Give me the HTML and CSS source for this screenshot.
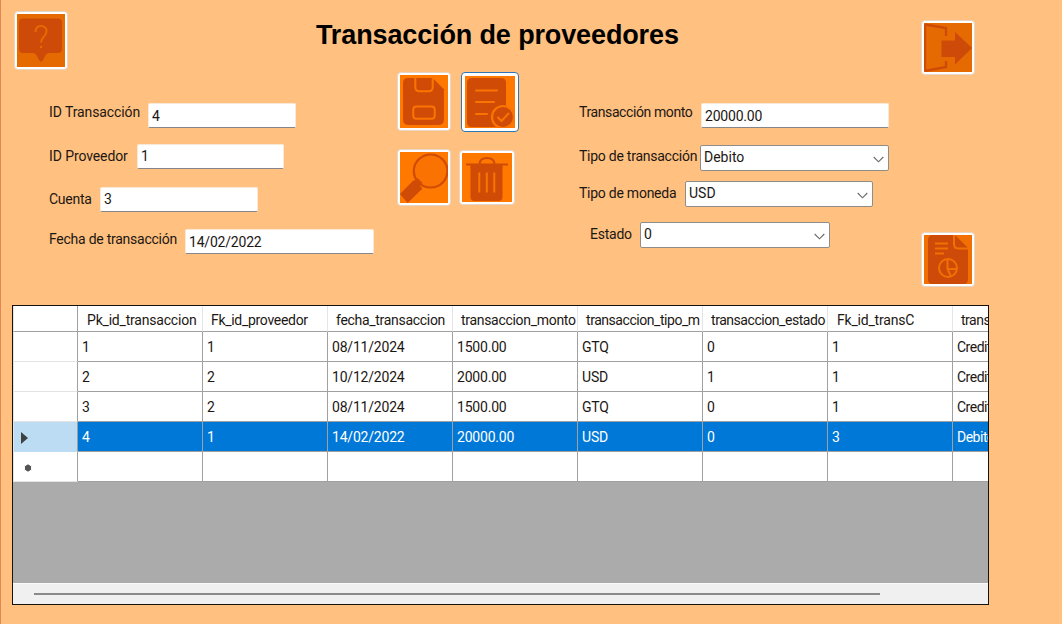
FILE: index.html
```html
<!DOCTYPE html>
<html lang="es">
<head>
<meta charset="utf-8">
<title>Transacción de proveedores</title>
<link rel="stylesheet" href="styles.css">
</head>
<body>
<div class="window">
  <div class="top">
    <div class="content">
      <header class="header">
        <button class="btn btn-help" aria-label="Ayuda">
          <svg viewBox="0 0 48 53" preserveAspectRatio="none"><rect width="48" height="53" fill="#e66a02"/><path d="M6 4.500h35q4 0 4 4v26q0 4.500-4 4.500h-9q-2.500 0-4 3l-2 4q-2 3.500-4 0l-2-4q-1.500-3-4-3H6q-4 0-4-4.500v-26q0-4 4-4z" fill="#cd4a09"/><path d="M18.500 18q0-6 5.500-6t5.500 5.500c0 5-5.500 5.500-5.500 11" fill="none" stroke="#e66a02" stroke-width="2"/><circle cx="24" cy="33" r="1.300" fill="#e66a02"/></svg>
        </button>
        <h1 class="title">Transacción de proveedores</h1>
      </header>
      <div class="form">
        <div class="fields fields-left">
          <div class="row row-id"><span class="label">ID Transacción</span><div class="input">4</div></div>
          <div class="row row-prov"><span class="label">ID Proveedor</span><div class="input">1</div></div>
          <div class="row row-cuenta"><span class="label">Cuenta</span><div class="input">3</div></div>
          <div class="row row-fecha"><span class="label">Fecha de transacción</span><div class="input">14/02/2022</div></div>
        </div>
        <div class="actions">
          <div class="pair pair-first">
            <button class="btn btn-save" aria-label="Guardar">
              <svg viewBox="0 0 47 52" preserveAspectRatio="none"><rect width="47" height="52" fill="#ff7800"/><path d="M8 3h24l11 11v30q0 5-5 5H8q-5 0-5-5V8q0-5 5-5z" fill="#d04b06"/><path d="M15 2v10q0 4 4 4h9q4 0 4-4V2M16 31h15q3 0 3 3v6q0 3-3 3H16q-3 0-3-3v-6q0-3 3-3z" fill="none" stroke="#fa7404" stroke-width="2"/></svg>
            </button>
            <button class="btn btn-edit" aria-label="Modificar">
              <svg viewBox="0 0 50 52" preserveAspectRatio="none"><rect width="50" height="52" fill="#ff7800"/><path d="M7 2h29q5 0 5 5v44H7q-5 0-5-5V7q0-5 5-5z" fill="#d04b06"/><path d="M11 14.500h21M11 26h18M11 38h11" stroke="#fa7404" stroke-width="2" stroke-linecap="round"/><circle cx="38" cy="41" r="11" fill="#d04b06" stroke="#fa7404" stroke-width="2.200"/><path d="M32.500 41l4 4 7.500-8" fill="none" stroke="#fa7404" stroke-width="2"/></svg>
            </button>
          </div>
          <div class="pair">
            <button class="btn btn-search" aria-label="Buscar">
              <svg viewBox="0 0 47 51" preserveAspectRatio="none"><rect width="47" height="51" fill="#ff7800"/><path d="M0 42l13.500-14L22 36.500 7.500 51z" fill="#d04b06"/><circle cx="30" cy="19" r="16.500" fill="#f97202" stroke="#d04b06" stroke-width="2.200"/><path d="M15 33l4.500-4.500" stroke="#d04b06" stroke-width="7"/></svg>
            </button>
            <button class="btn btn-trash" aria-label="Eliminar">
              <svg viewBox="0 0 50 49" preserveAspectRatio="none"><rect width="50" height="49" fill="#ff7800"/><path d="M8.500 14h32v30q0 4-4 4h-24q-4 0-4-4z" fill="#d04b06"/><path d="M4 11.500h42M17.500 11Q18 5 25 5t7.500 6" fill="none" stroke="#d04b06" stroke-width="2.200"/><path d="M8.500 11h32v4h-32z" fill="#d04b06"/><path d="M17.300 19.500v20M24.800 19.500v20M32.300 19.500v20" stroke="#fa7404" stroke-width="2"/></svg>
            </button>
          </div>
        </div>
        <div class="fields fields-right">
          <div class="row row-monto"><span class="label">Transacción monto</span><div class="input">20000.00</div></div>
          <div class="row row-tipo"><span class="label">Tipo de transacción</span><div class="combo"><span>Debito</span><svg class="chev" viewBox="0 0 11 7"><path d="M.7 1l4.800 4.800L10.300 1"/></svg></div></div>
          <div class="row row-moneda"><span class="label">Tipo de moneda</span><div class="combo"><span>USD</span><svg class="chev" viewBox="0 0 11 7"><path d="M.7 1l4.800 4.800L10.300 1"/></svg></div></div>
          <div class="row row-estado"><span class="label">Estado</span><div class="combo"><span>0</span><svg class="chev" viewBox="0 0 11 7"><path d="M.7 1l4.800 4.800L10.300 1"/></svg></div></div>
        </div>
      </div>
    </div>
    <div class="side">
      <button class="btn btn-exit" aria-label="Salir">
        <svg viewBox="0 0 48 49" preserveAspectRatio="none"><rect width="48" height="49" fill="#e66a02"/><path d="M1 1.500L22 5v8M1 48l21-4v-6M1 1.500V48" fill="none" stroke="#cd4a09" stroke-width="2.300"/><path d="M17.500 17.500H31V9l17 16-17 16.500V34H17.500z" fill="#cd4a09"/></svg>
      </button>
      <button class="btn btn-report" aria-label="Reporte">
        <svg viewBox="0 0 48 49" preserveAspectRatio="none"><rect width="48" height="49" fill="#f27003"/><path d="M9 0h22l13 13v31q0 5-4 5H7q-3-1-3-5V5q0-5 5-5z" fill="#cd4a09"/><path d="M30 0v9q0 4.500 4.500 4.500H44M11 8.500h13M11 13.500h13M11 18.500h9" fill="none" stroke="#f27003" stroke-width="2"/><circle cx="24" cy="33" r="9" fill="none" stroke="#f27003" stroke-width="2"/><path d="M23.500 24v10l3.500 7.500M24 34h9" fill="none" stroke="#f27003" stroke-width="2"/></svg>
      </button>
    </div>
  </div>

  <div class="grid">
    <div class="tr th"><div class="rh"></div><div>Pk_id_transaccion</div><div>Fk_id_proveedor</div><div>fecha_transaccion</div><div>transaccion_monto</div><div>transaccion_tipo_m</div><div>transaccion_estado</div><div>Fk_id_transC</div><div>transaccion</div></div>
    <div class="tr"><div class="rh"></div><div>1</div><div>1</div><div>08/11/2024</div><div>1500.00</div><div>GTQ</div><div>0</div><div>1</div><div>Credito</div></div>
    <div class="tr"><div class="rh"></div><div>2</div><div>2</div><div>10/12/2024</div><div>2000.00</div><div>USD</div><div>1</div><div>1</div><div>Credito</div></div>
    <div class="tr"><div class="rh"></div><div>3</div><div>2</div><div>08/11/2024</div><div>1500.00</div><div>GTQ</div><div>0</div><div>1</div><div>Credito</div></div>
    <div class="tr selected"><div class="rh"><svg class="arrow" viewBox="0 0 7 12"><path d="M0 0l7 6-7 6z"/></svg></div><div>4</div><div>1</div><div>14/02/2022</div><div>20000.00</div><div>USD</div><div>0</div><div>3</div><div>Debito</div></div>
    <div class="tr"><div class="rh"><svg class="star" viewBox="0 0 8 8"><circle cx="4" cy="4" r="2.700"/><path d="M4 .3v7.400M.8 2.100l6.400 3.800M.8 5.900l6.400-3.800"/></svg></div><div></div><div></div><div></div><div></div><div></div><div></div><div></div><div></div></div>
    <div class="scroll"><div class="thumb"></div></div>
  </div>
</div>
</body>
</html>
```
FILE: styles.css
```css
* { box-sizing: border-box; }
body { margin: 0; }
.window {
  width: 1062px; height: 624px; overflow: hidden;
  background: #ffc080; border-left: 1px solid #df8a55;
  font-family: Roboto, "Liberation Sans", sans-serif;
  font-size: 14px; color: #1c1713;
}
.top { display: flex; height: 305px; }
.content { width: 920px; }
.header { display: flex; height: 72px; padding: 11px 0 0 13px; }
.title {
  margin: 8px 0 0 248px; font: bold 27px/32px "Liberation Sans", Arial, sans-serif;
  letter-spacing: -.13px; color: #000; white-space: nowrap;
}
.btn {
  display: block; flex: none; padding: 2px; background: #fff;
  border: 1px solid #e6d6c8; border-radius: 4px;
}
.btn svg { display: block; width: 100%; height: 100%; }
.btn-help { width: 54px; height: 59px; }
.form { display: flex; }
.fields { white-space: nowrap; }
.fields-left { width: 396px; padding: 31px 0 0 48px; }
.row { display: flex; }
.label { flex: none; line-height: 18px; letter-spacing: -.25px; }
.input {
  height: 25px; padding: 3px 0 0 3px; line-height: 18px; letter-spacing: -.2px; background: #fff;
  border: 1px solid #fbe9d8; border-bottom-color: #85868b; border-radius: 2px;
}
.row-id { height: 41px; }
.row-id .label { width: 99px; letter-spacing: -.1px; }
.row-id .input { width: 148px; }
.row-prov { height: 43px; }
.row-prov .label { width: 88px; padding-top: 3px; letter-spacing: -.1px; }
.row-prov .input { width: 147px; }
.row-prov .input, .row-cuenta .input { padding-top: 2px; }
.row-cuenta { height: 42px; }
.row-cuenta .label { width: 51px; padding-top: 3px; }
.row-cuenta .input { width: 158px; }
.row-fecha .label { width: 136px; padding-top: 1px; }
.row-fecha .input { width: 189px; }
.actions { width: 182px; display: flex; flex-direction: column; gap: 17px; }
.pair { display: flex; gap: 8px; }
.pair-first { gap: 10px; height: 60px; }
.btn-save { width: 54px; height: 59px; }
.btn-edit { width: 58px; height: 60px; border-color: #2e75b5; padding: 3px; }
.btn-search { width: 54px; height: 57px; }
.btn-trash { width: 56px; height: 55px; margin-top: 1px; }
.fields-right { padding-top: 31px; }
.combo {
  display: flex; justify-content: space-between; height: 26px; padding: 2px 4px 0 3px;
  line-height: 18px; background: #fff; border: 1px solid #8f8c89; border-radius: 2px;
}
.chev { width: 11px; height: 7px; margin-top: 8px; fill: none; stroke: #69696b; stroke-width: 1.1; }
.row-monto { height: 42px; }
.row-monto .label { width: 122px; letter-spacing: -.4px; }
.row-monto .input { width: 188px; }
.row-tipo { height: 36px; }
.row-tipo .label { width: 121px; padding-top: 2px; }
.row-tipo .combo { width: 189px; }
.row-moneda { height: 41px; }
.row-moneda .label { width: 106px; padding-top: 3px; }
.row-moneda .combo { width: 188px; }
.row-estado { padding-left: 11px; }
.row-estado .label { width: 50px; padding-top: 3px; }
.row-estado .combo { width: 190px; }
.side { padding-top: 20px; }
.btn-exit { width: 54px; height: 55px; }
.btn-report { width: 54px; height: 55px; margin-top: 157px; }

.grid {
  display: flex; flex-direction: column; width: 977px; height: 300px; margin-left: 11px;
  background: #ababab; border: 1px solid #17120e; overflow: hidden;
}
.tr { display: flex; flex: none; height: 30px; }
.tr > div {
  flex: none; width: 125px; padding-left: 4px; line-height: 31px; overflow: hidden; white-space: nowrap;
  letter-spacing: -.2px; background: #fff;
  border-right: 1px solid #a0a0a0; border-bottom: 1px solid #a0a0a0;
}
.tr > .rh {
  width: 65px; border-left: 1px solid #e4e4e4; border-bottom-color: #e3e3e3;
  display: flex; align-items: center;
}
.th { height: 26px; }
.th > div { line-height: 28px; padding-left: 8px; letter-spacing: -.3px; border-right-color: #e5e5e5; }
.th > div:nth-child(2), .th > div:nth-child(8) { padding-left: 9px; letter-spacing: -.2px; }
.th > div:nth-child(6), .th > div:nth-child(7) { letter-spacing: -.45px; }
.th > div:nth-child(9), .tr > div:nth-child(9) { letter-spacing: -.5px; }
.th > .rh { border-bottom-color: #a0a0a0; border-right-color: #a0a0a0; }
.selected > div { background: #0078d7; color: #fff; }
.selected > .rh { background: #bcdcf4; border-bottom-color: #bcdcf4; }
.arrow { width: 7px; height: 12px; margin: 2px 0 0 7px; margin-left: 3px; fill: #404040; }
.star { width: 8px; height: 8px; margin: 2px 0 0 6px; fill: #555; stroke: #555; stroke-width: 1; }
.scroll { margin-top: auto; height: 21px; padding: 9px 0 0 21px; background: #f0f0f0; border-top: 1px solid #fafafa; }
.thumb { width: 846px; height: 2px; background: #8a8a8a; }
```
